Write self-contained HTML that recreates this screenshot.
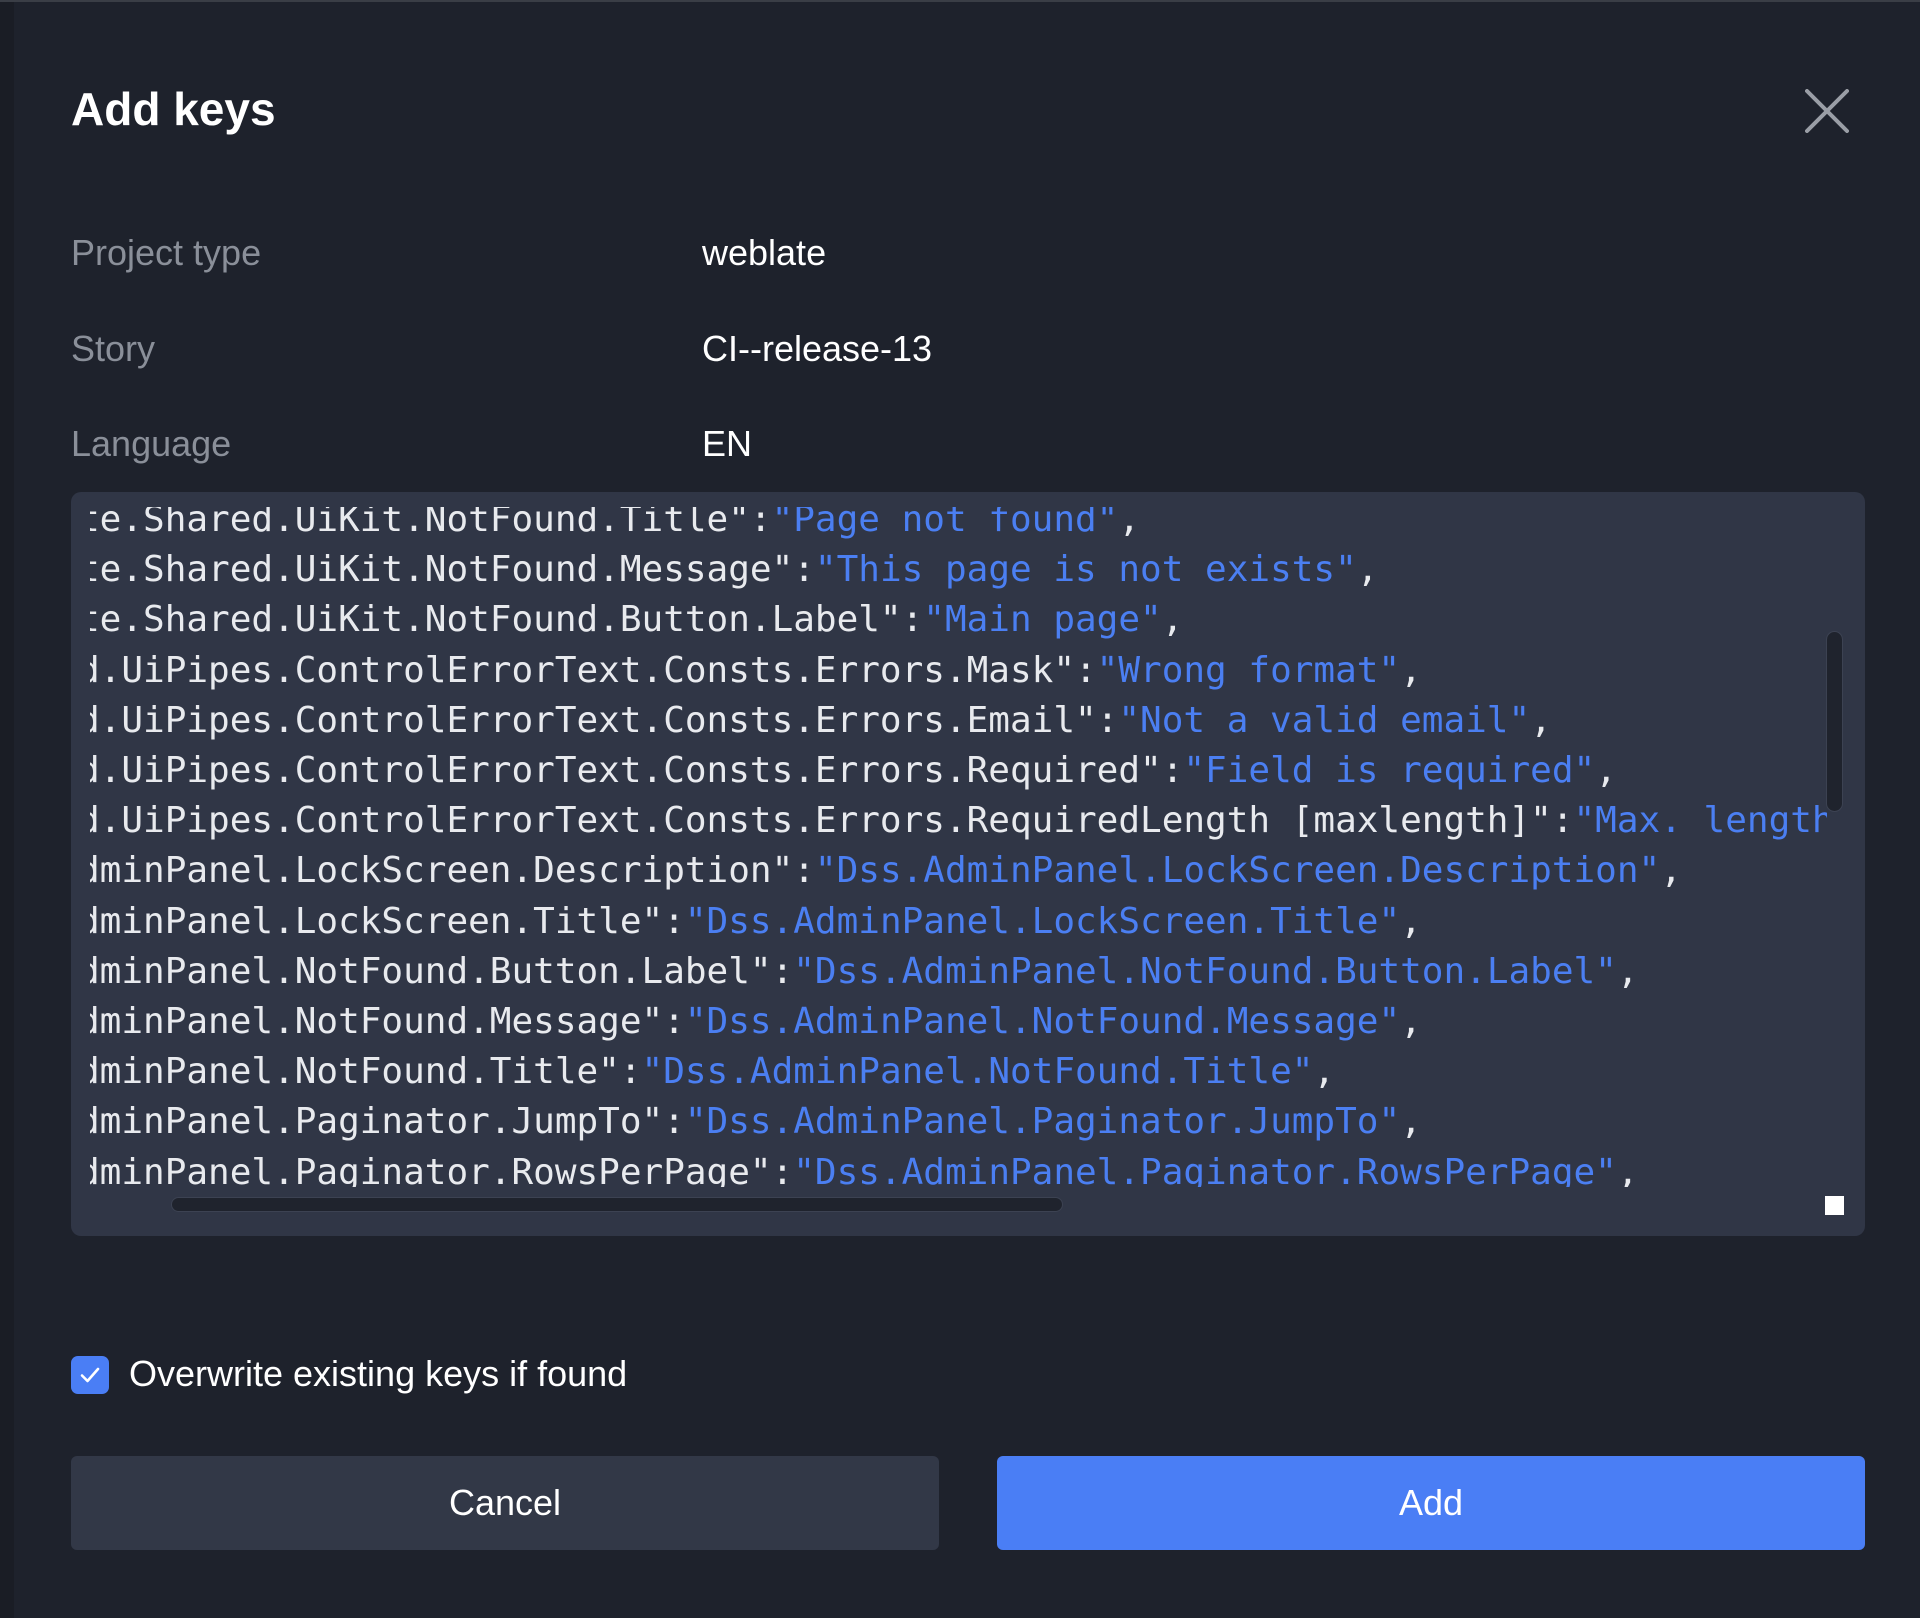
<!DOCTYPE html>
<html><head><meta charset="utf-8"><style>
*{margin:0;padding:0;box-sizing:border-box}
html,body{width:1920px;height:1618px;background:#1e222c;overflow:hidden;font-family:"Liberation Sans",sans-serif}
.edge{position:absolute;left:0;top:0;width:14px;height:1618px;background:#1a1d25}
.topl{position:absolute;left:0;top:0;width:1920px;height:2px;background:#3a3e46}
.t{position:absolute;white-space:nowrap}
h1{position:absolute;left:71px;top:82px;font-size:46px;font-weight:bold;color:#fff}
.lab{color:#8a8f99;font-size:36px}
.val{color:#fff;font-size:36px}
.box{position:absolute;left:71px;top:492px;width:1794px;height:744px;background:#303646;border-radius:10px}
.clip{position:absolute;left:90px;top:507px;width:1737px;height:680px;overflow:hidden}
pre{position:absolute;left:-12px;top:-12px;font-family:"DejaVu Sans Mono","Liberation Mono",monospace;font-size:36px;line-height:50.2px;color:#e8eaee}
pre b{font-weight:normal;color:#4b7ff2}
.vs{position:absolute;left:1826px;top:631px;width:17px;height:181px;background:#1f232d;border-radius:9px;border:1px solid #3c4252}
.hs{position:absolute;left:171px;top:1197px;width:892px;height:15px;background:#1f232d;border-radius:8px;border:1px solid #3c4252}
.sq{position:absolute;left:1825px;top:1196px;width:19px;height:19px;background:#fff}
.cb{position:absolute;left:71px;top:1356px;width:38px;height:38px;background:#4a7ef5;border-radius:7px}
.btn{position:absolute;top:1456px;width:868px;height:94px;border-radius:6px;color:#fff;font-size:36px;text-align:center;line-height:94px}
</style></head><body>
<div class="edge"></div><div class="topl"></div>
<h1>Add keys</h1>
<svg style="position:absolute;left:1805px;top:89px" width="44" height="44" viewBox="0 0 44 44"><path d="M2 2L42 42M42 2L2 42" stroke="#9a9ea6" stroke-width="4" stroke-linecap="round"/></svg>
<div class="t lab" style="left:71px;top:232px">Project type</div>
<div class="t val" style="left:702px;top:232px">weblate</div>
<div class="t lab" style="left:71px;top:328px">Story</div>
<div class="t val" style="left:702px;top:328px">CI--release-13</div>
<div class="t lab" style="left:71px;top:423px">Language</div>
<div class="t val" style="left:702px;top:423px">EN</div>
<div class="box"></div>
<div class="clip"><pre>te.Shared.UiKit.NotFound.Title":<b>"Page not found"</b>,
te.Shared.UiKit.NotFound.Message":<b>"This page is not exists"</b>,
te.Shared.UiKit.NotFound.Button.Label":<b>"Main page"</b>,
d.UiPipes.ControlErrorText.Consts.Errors.Mask":<b>"Wrong format"</b>,
d.UiPipes.ControlErrorText.Consts.Errors.Email":<b>"Not a valid email"</b>,
d.UiPipes.ControlErrorText.Consts.Errors.Required":<b>"Field is required"</b>,
d.UiPipes.ControlErrorText.Consts.Errors.RequiredLength [maxlength]":<b>"Max. length exceeded"</b>,
dminPanel.LockScreen.Description":<b>"Dss.AdminPanel.LockScreen.Description"</b>,
dminPanel.LockScreen.Title":<b>"Dss.AdminPanel.LockScreen.Title"</b>,
dminPanel.NotFound.Button.Label":<b>"Dss.AdminPanel.NotFound.Button.Label"</b>,
dminPanel.NotFound.Message":<b>"Dss.AdminPanel.NotFound.Message"</b>,
dminPanel.NotFound.Title":<b>"Dss.AdminPanel.NotFound.Title"</b>,
dminPanel.Paginator.JumpTo":<b>"Dss.AdminPanel.Paginator.JumpTo"</b>,
dminPanel.Paginator.RowsPerPage":<b>"Dss.AdminPanel.Paginator.RowsPerPage"</b>,</pre></div>
<div class="vs"></div><div class="hs"></div><div class="sq"></div>
<div class="cb"><svg width="38" height="38" viewBox="0 0 38 38"><path d="M11 19.5L16.5 25L27 13" fill="none" stroke="#fff" stroke-width="2.6" stroke-linecap="round" stroke-linejoin="round"/></svg></div>
<div class="t val" style="left:129px;top:1353px">Overwrite existing keys if found</div>
<div class="btn" style="left:71px;background:#323847">Cancel</div>
<div class="btn" style="left:997px;background:#4a7ef5">Add</div>
</body></html>
